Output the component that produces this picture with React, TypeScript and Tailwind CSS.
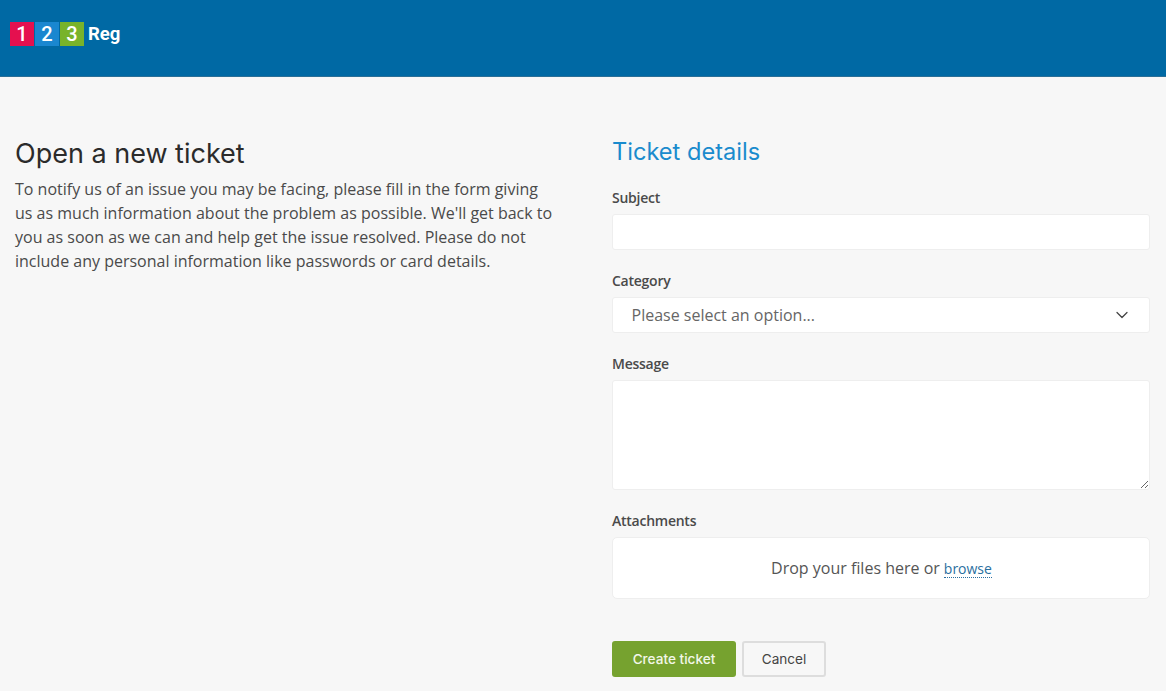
import { ChevronDown } from 'lucide-react'

const sans = "font-['Open_Sans',sans-serif]"
const heading = "font-['Inter',sans-serif]"

function Logo() {
  return (
    <div className="flex items-center font-['Roboto',sans-serif] font-medium text-white">
      <span className="w-6 h-6 mr-px flex items-center justify-center bg-[#e5104f] text-[20px] leading-none">1</span>
      <span className="w-6 h-6 mr-px flex items-center justify-center bg-[#1a87d0] text-[20px] leading-none">2</span>
      <span className="w-6 h-6 flex items-center justify-center bg-[#78b32a] text-[20px] leading-none">3</span>
      <span className="ml-1 text-[18.5px] font-bold leading-none">Reg</span>
    </div>
  )
}

function Label({ children }: { children: string }) {
  return <p className="h-[22px] text-[14px] leading-[22px] font-semibold tracking-[-0.25px] text-[#4a4a4a]">{children}</p>
}

export default function App() {
  return (
    <div className={`${sans} min-h-[691px] h-[691px] overflow-hidden bg-[#f7f7f7]`}>
      {/* Header */}
      <header className="h-[77px] pt-[22px] pl-[10px] bg-[#0069a4] border-b border-[#2a6f97]">
        <Logo />
      </header>

      <main className="flex pl-[15px] pr-4">
        {/* Intro */}
        <div className="w-[597px] pt-[59px]">
          <h1 className={`${heading} text-[27px] leading-[36px] font-normal text-[#2b2b2b]`}>Open a new ticket</h1>
          <p className="w-[540px] mt-[5px] text-[16px] leading-6 text-[#4a4a4a]">
            To notify us of an issue you may be facing, please fill in the form giving us as much information about the problem as possible. We'll get back to you as soon as we can and help get the issue resolved. Please do not include any personal information like passwords or card details.
          </p>
        </div>

        {/* Form */}
        <form className="w-[538px] pt-[58px]">
          <h2 className={`${heading} text-[23.6px] leading-[34px] font-normal text-[#1a8bcd]`}>Ticket details</h2>

          <div className="mt-[18px]">
            <Label>Subject</Label>
            <input className="block w-full h-9 mt-[5px] px-[19px] bg-white border border-[#eeeeee] rounded-[3px]" />
          </div>

          <div className="mt-[20px]">
            <Label>Category</Label>
            <div className="flex items-center justify-between h-9 mt-[5px] pl-[18.5px] pr-[17px] bg-white border border-[#eeeeee] rounded-[3px] text-[16px] text-[#666]">
              <span>Please select an option...</span>
              <ChevronDown size={20} strokeWidth={1.5} className="text-[#444]" />
            </div>
          </div>

          <div className="mt-[20px]">
            <Label>Message</Label>
            <textarea className="block w-full h-[110px] mt-[5px] px-[19px] bg-white border border-[#eeeeee] rounded-[3px]" />
          </div>

          <div className="mt-[20px]">
            <Label>Attachments</Label>
            <div className="flex items-center justify-center h-[62px] mt-[5px] pl-px bg-white border border-[#eeeeee] rounded-[5px] text-[16px] text-[#555]">
              <span>Drop your files here or</span>
              <a className="ml-[4px] mt-[1px] text-[14px] leading-[17px] text-[#2a6fa0] border-b border-dotted border-[#2a6fa0]">browse</a>
            </div>
          </div>

          <div className={`${heading} flex gap-[6px] mt-[42px]`}>
            <button type="button" className="w-[124px] h-9 rounded-[3px] bg-[#76a22f] text-[13.6px] font-medium text-[#f2f7e8]">Create ticket</button>
            <button type="button" className="w-[84px] h-9 rounded-[3px] border-2 border-[#dddddd] bg-[#f7f7f7] text-[13.6px] text-[#444]">Cancel</button>
          </div>
        </form>
      </main>
    </div>
  )
}
